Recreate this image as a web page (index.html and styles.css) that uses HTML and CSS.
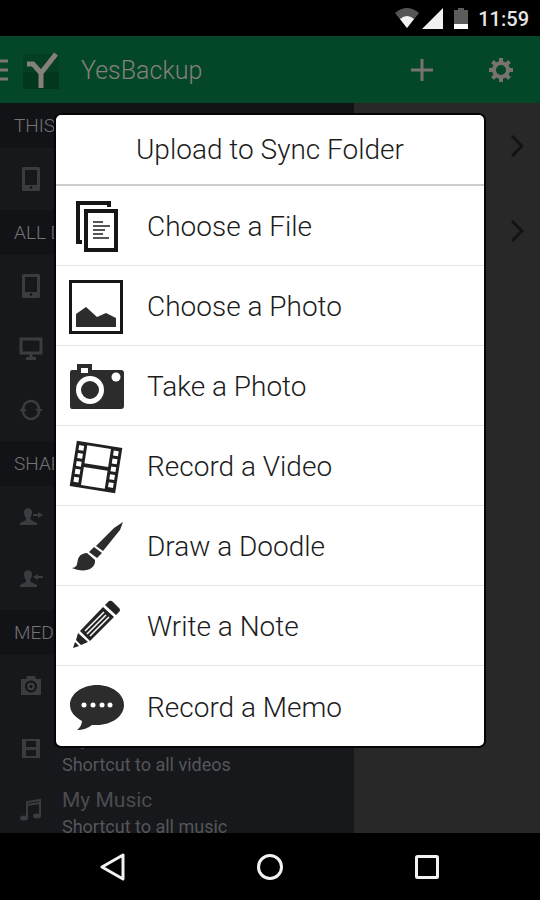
FILE: index.html
```html
<!DOCTYPE html>
<html lang="en">
<head>
<meta charset="utf-8">
<meta name="viewport" content="width=device-width, initial-scale=1">
<title>YesBackup</title>
<link rel="stylesheet" href="styles.css">
</head>
<body>
<div class="app">
  <div class="status">
    <svg width="24" height="22" viewBox="0 0 24 22" aria-hidden="true"><path fill="#555" d="M0 6Q12-4 24 6L12 21Z"/><path fill="#f4f4f4" d="M5 12Q12 6 19 12L12 21Z"/></svg>
    <svg class="signal" width="21" height="21" viewBox="0 0 21 21" aria-hidden="true"><path fill="#f0f0f0" d="M21 0V21H0Z"/></svg>
    <svg class="battery" width="14" height="21" viewBox="0 0 14 21" aria-hidden="true"><path fill="#5c5c5c" d="M4 0H10V2H14V16H0V2H4Z"/><path fill="#fff" d="M0 16H14V21H0Z"/></svg>
    <time>11:59</time>
  </div>
  <header class="bar">
    <button class="menu" aria-label="Menu"><svg width="8" height="22" viewBox="0 0 8 22"><path stroke="#7b7672" stroke-width="3" d="M0 2H8M0 11H8M0 20H8"/></svg></button>
    <svg class="logo" width="36" height="38" viewBox="0 0 36 38" aria-hidden="true"><path fill="#043f22" d="M0 3H36V38H0Z"/><path fill="#03371d" d="M0 21H36V38H0Z"/><path fill="none" stroke="#85807c" stroke-width="5" d="M4 13H10L18 22L33 3M18 21V37"/></svg>
    <h1>YesBackup</h1>
    <button class="tool add" aria-label="Add"><svg width="22" height="22" viewBox="0 0 22 22"><path stroke="#78736f" stroke-width="3" d="M11 0V22M0 11H22"/></svg></button>
    <button class="tool" aria-label="Settings"><svg width="24" height="24" viewBox="-12 -12 24 24"><circle r="7" fill="none" stroke="#78736f" stroke-width="4"/><g stroke="#78736f" stroke-width="4"><path d="M0-8V-12M0 8V12M-8 0H-12M8 0H12"/><path transform="rotate(45)" d="M0-8V-12M0 8V12M-8 0H-12M8 0H12"/></g></svg></button>
  </header>
  <main class="content">
    <nav class="side" aria-label="Locations">
      <h2>THIS DEVICE</h2>
      <a href="#" aria-label="This device"><svg viewBox="0 0 24 24"><path fill="none" stroke="currentColor" stroke-width="3" stroke-linejoin="round" d="M4.500 1.500H19.500V22.500H4.500Z"/><path fill="currentColor" d="M4 18H20V23H4Z"/><circle cx="12" cy="20.500" r="1.200" fill="#111215"/></svg></a>
      <h2>ALL DEVICES</h2>
      <a href="#" aria-label="Tablet"><svg viewBox="0 0 24 24"><path fill="none" stroke="currentColor" stroke-width="3" stroke-linejoin="round" d="M4.500 1.500H19.500V22.500H4.500Z"/><path fill="currentColor" d="M4 18H20V23H4Z"/><circle cx="12" cy="20.500" r="1.200" fill="#111215"/></svg></a>
      <a href="#" aria-label="Computer"><svg viewBox="0 0 24 24"><path fill="none" stroke="currentColor" stroke-width="3" d="M2 3H22V17H2ZM12 17V22M7 22.500H17"/></svg></a>
      <a href="#" aria-label="Sync folder"><svg viewBox="0 0 24 24"><path fill="none" stroke="currentColor" stroke-width="2.500" d="M4 11A8 8 0 0 1 20 11M20 13A8 8 0 0 1 4 13"/><path fill="currentColor" d="M0 13L4 9L8 13ZM16 11H24L20 15Z"/></svg></a>
      <h2>SHARED</h2>
      <a href="#" aria-label="Shared by me"><svg viewBox="0 0 24 24"><path fill="currentColor" d="M5 7C5 2 13 2 13 7C13 10 12 12 11 13L12 15L18 18V20H1V18L7 15V13C6 12 5 10 5 7ZM14 9H19V7L24 10L19 13V11H14Z"/></svg></a>
      <a href="#" aria-label="Shared with me"><svg viewBox="0 0 24 24"><path fill="currentColor" d="M5 7C5 2 13 2 13 7C13 10 12 12 11 13L12 15L18 18V20H1V18L7 15V13C6 12 5 10 5 7ZM24 9H19V7L14 10L19 13V11H24Z"/></svg></a>
      <h2>MEDIA</h2>
      <a href="#" aria-label="Photos"><svg viewBox="0 0 24 24"><path fill="currentColor" d="M2 5H7L8 2H16L17 5H22V21H2Z"/><circle cx="12" cy="12.500" r="5" fill="none" stroke="#111215" stroke-width="2"/><circle cx="12" cy="12.500" r="1.500" fill="#111215"/></svg></a>
      <a href="#"><svg viewBox="0 0 24 24"><path fill="currentColor" fill-rule="evenodd" d="M3 3H21V22H3ZM7 5V11H17V5ZM7 14V20H17V14Z"/></svg><span><b>My Videos</b><small>Shortcut to all videos</small></span></a>
      <a href="#"><svg viewBox="0 0 24 24"><path fill="none" stroke="currentColor" stroke-width="2" d="M8 19V4L21 2V17M8 7L21 5"/><ellipse cx="5" cy="20" rx="4" ry="2.500" fill="currentColor"/><ellipse cx="18" cy="18" rx="4" ry="2.500" fill="currentColor"/></svg><span><b>My Music</b><small>Shortcut to all music</small></span></a>
    </nav>
    <div class="files">
      <a href="#" aria-label="Open first folder"><svg width="14" height="22" viewBox="0 0 14 22"><path fill="none" stroke="#131313" stroke-width="3" d="M2 1L12 11L2 21"/></svg></a>
      <a href="#" aria-label="Open second folder"><svg width="14" height="22" viewBox="0 0 14 22"><path fill="none" stroke="#131313" stroke-width="3" d="M2 1L12 11L2 21"/></svg></a>
    </div>
  </main>
  <footer class="keys">
    <button aria-label="Back"><svg width="28" height="28" viewBox="0 0 28 28"><path d="M24 2V26L3 14Z"/></svg></button>
    <button aria-label="Home"><svg width="28" height="28" viewBox="0 0 28 28"><circle cx="14" cy="14" r="11.500"/></svg></button>
    <button aria-label="Recent apps"><svg width="28" height="28" viewBox="0 0 28 28"><rect x="3.500" y="3.500" width="21" height="21" rx="1"/></svg></button>
  </footer>
  <div class="overlay">
    <section class="dialog" role="dialog" aria-labelledby="dialog-title">
      <h2 id="dialog-title">Upload to Sync Folder</h2>
      <button><svg viewBox="0 0 56 56"><path fill="none" stroke="#161616" stroke-width="4" d="M14 43H10V4H41V8"/><path fill="#fff" stroke="#161616" stroke-width="4" d="M18 12H48V51H18Z"/><path stroke="#555" stroke-width="2" d="M25 23H35M25 27H42M25 31H37M25 35H35M25 39H41"/></svg>Choose a File</button>
      <button><svg viewBox="0 0 56 56"><path fill="#fff" stroke="#161616" stroke-width="3" d="M2.500 2.500H53.500V53.500H2.500Z"/><path fill="#2c2c2c" d="M8 35L18 28L29 38L38 34L48 39V48H8Z"/></svg>Choose a Photo</button>
      <button><svg viewBox="0 0 56 56"><path fill="#2c2c2c" d="M4 11H9V5H24V11H53Q56 11 56 14V47Q56 50 53 50H4Q2 50 2 47V14Q2 11 4 11Z"/><path fill="#fff" d="M13 9H20V14H13Z"/><circle cx="22" cy="31" r="11.500" fill="#2c2c2c" stroke="#fff" stroke-width="5"/><circle cx="48" cy="18" r="4.500" fill="#fff"/></svg>Take a Photo</button>
      <button><svg viewBox="0 0 56 56"><g transform="rotate(9 28 28)"><path fill="#202020" d="M5 5H51V51H5Z"/><path fill="#fff" d="M16 8H40V26H16ZM16 30H40V48H16Z"/><path stroke="#fff" stroke-width="5" stroke-dasharray="5 3" d="M10.500 9V48M45.500 9V48"/></g></svg>Record a Video</button>
      <button><svg viewBox="0 0 56 56"><g fill="#2c2c2c"><path d="M55 3L52 11L35 32L28 27L46 9Z"/><path d="M26 28L34 34L29 39L21 33Z"/><path d="M19 34L27 41C28 51 15 54 4 49C11 48 8 43 11 38C13 35 16 34 19 34Z"/></g></svg>Draw a Doodle</button>
      <button><svg viewBox="0 0 56 56"><g fill="#242424"><path d="M37 6L41 2Q43 1 45 3L51 9Q53 11 51 13L48 16Z"/><path d="M35 8L46 18L22 42L12 32Z"/><path d="M10 34L20 43L13 46L8 41ZM7 43L11 47L5 49Z"/></g><path stroke="#fff" stroke-width="1.500" d="M17 32L36 13M19 35L38 16M22 37L41 18"/></svg>Write a Note</button>
      <button><svg viewBox="0 0 56 56"><path fill="#2c2c2c" d="M29 6C44 6 56 15 56 26C56 37 44 46 29 46L24 46Q18 51 9 51Q14 47 14 42C7 38 2 33 2 26C2 15 14 6 29 6Z"/><g fill="#fff"><circle cx="16" cy="26" r="2.500"/><circle cx="25" cy="26" r="2.500"/><circle cx="34" cy="26" r="2.500"/><circle cx="42" cy="26" r="2.500"/></g></svg>Record a Memo</button>
    </section>
  </div>
</div>
</body>
</html>
```
FILE: styles.css
```css
* { box-sizing: border-box; }
body { margin: 0; background: #000; font-family: Roboto, sans-serif; }
h1, h2 { margin: 0; font-weight: 400; }
button { margin: 0; padding: 0; border: 0; background: none; font: inherit; color: inherit; }
a { color: inherit; text-decoration: none; }
svg { display: block; flex: none; }

.app { position: relative; display: flex; flex-direction: column; height: 100vh; overflow: hidden; }

.status { flex: none; display: flex; align-items: center; justify-content: flex-end; height: 36px; padding-right: 11px; color: #e6e6e6; }
.signal { margin-left: 3px; }
.battery { margin: 0 10px 0 11px; }
.status time { font-size: 20px; font-weight: 500; line-height: 36px; padding-top: 2px; }

.bar { flex: none; display: flex; align-items: center; height: 67px; padding-right: 27px; background: #044628; }
.logo { margin: 0 22px 0 15px; }
.bar h1 { flex: 1; padding-top: 2px; font-size: 25px; font-weight: 300; color: #84817c; }
.tool { display: flex; justify-content: center; width: 24px; }
.add { margin-right: 55px; }

.content { flex: 1; display: flex; min-height: 0; background: #282828; }
.side { flex: none; width: calc(65% + 3px); overflow: hidden; background: #16181c; color: #4b4c4f; }
.side h2 { height: 45px; padding: 1px 0 0 14px; background: #121317; font-size: 19px; font-weight: 300; line-height: 44px; color: #727376; }
.side a { display: flex; align-items: center; gap: 19px; height: 62px; padding-left: 19px; color: #3b3c40; }
.side svg { width: 24px; height: 24px; }
.side span { display: flex; flex-direction: column; padding-top: 4px; }
.side b { font-size: 21px; font-weight: 400; line-height: 28px; color: #4b4c4f; }
.side small { font-size: 18px; line-height: 25px; color: #55565a; }
.files { flex: 1; }
.files a { display: flex; align-items: center; justify-content: flex-end; height: 85px; padding-right: 16px; }

.keys { flex: none; display: flex; align-items: center; justify-content: center; gap: 129px; height: 67px; }
.keys svg { fill: none; stroke: #f2f2f2; stroke-width: 3; stroke-linejoin: round; }

.overlay { position: absolute; inset: 0; padding-top: 113px; }
.dialog { width: 80%; margin: 0 auto; border: 2px solid #050505; border-radius: 7px; background: #fff; overflow: hidden; }
.dialog h2 { height: 71px; border-bottom: 2px solid #ccc; font-size: 28px; font-weight: 300; line-height: 70px; text-align: center; color: #1c1c1c; }
.dialog button { display: flex; align-items: center; gap: 23px; width: 100%; height: 80px; padding: 2px 0 0 12px; border-bottom: 1px solid #e4e6e8; font-size: 28px; font-weight: 300; color: #1c1c1c; text-align: left; }
.dialog button:last-child { border-bottom: 0; }
.dialog svg { width: 56px; height: 56px; }
```
